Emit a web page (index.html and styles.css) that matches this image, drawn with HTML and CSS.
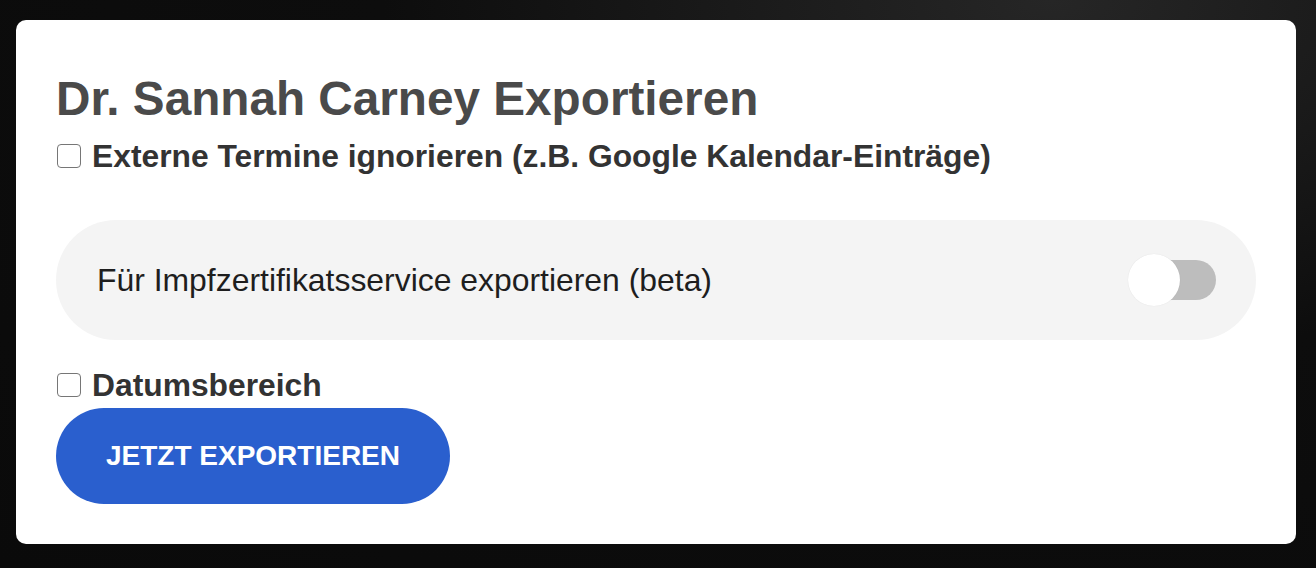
FILE: index.html
```html
<!DOCTYPE html>
<html lang="de">
<head>
<meta charset="utf-8">
<link rel="stylesheet" href="styles.css">
</head>
<body>
<div class="backdrop">
  <div class="dialog">
    <h1 class="title">Dr. Sannah Carney Exportieren</h1>
    <label class="check-row first">
      <span class="box"></span>
      <span class="check-label">Externe Termine ignorieren (z.B. Google Kalendar-Einträge)</span>
    </label>
    <div class="option-pill">
      <span class="option-text">Für Impfzertifikatsservice exportieren (beta)</span>
      <span class="toggle"><span class="track"></span><span class="knob"></span></span>
    </div>
    <label class="check-row second">
      <span class="box"></span>
      <span class="check-label">Datumsbereich</span>
    </label>
    <button class="export-btn">JETZT EXPORTIEREN</button>
  </div>
</div>
</body>
</html>
```
FILE: styles.css
```css
html, body {
  margin: 0;
  padding: 0;
  height: 100%;
}
body {
  background: #0c0c0c;
  font-family: "Liberation Sans", Arial, sans-serif;
}
.backdrop {
  height: 568px;
  box-sizing: border-box;
  padding: 20px 20px 24px 16px;
  background: radial-gradient(ellipse at 80% 0%, #262626 0%, #0d0d0d 45%, #0a0a0a 100%);
}
.dialog {
  background: #fff;
  border-radius: 10px;
  height: 524px;
  box-sizing: border-box;
  padding: 0 40px 40px 40px;
  display: flex;
  flex-direction: column;
  align-items: flex-start;
}
.title {
  margin: 51px 0 0 0;
  font-size: 47.7px;
  line-height: 56px;
  font-weight: bold;
  color: #4a4a4a;
}
.check-row {
  display: flex;
  align-items: center;
  gap: 11px;
}
.check-row.first {
  margin-top: 11px;
}
.check-row.second {
  margin-top: 27px;
}
.box {
  width: 24px;
  height: 24px;
  border: 1.5px solid #767676;
  border-radius: 4px;
  box-sizing: border-box;
  margin-left: 1px;
}
.check-label {
  font-size: 31.8px;
  line-height: 36px;
  font-weight: bold;
  color: #333;
}
.option-pill {
  margin-top: 46px;
  align-self: stretch;
  height: 120px;
  border-radius: 60px;
  background: #f4f4f4;
  display: flex;
  align-items: center;
  justify-content: space-between;
  padding: 0 40px 0 41px;
}
.option-text {
  font-size: 31.9px;
  color: #1e1e1e;
}
.toggle {
  position: relative;
  width: 88px;
  height: 52px;
  display: flex;
  align-items: center;
}
.track {
  margin-left: 8px;
  width: 80px;
  height: 40px;
  border-radius: 20px;
  background: #bdbdbd;
}
.knob {
  position: absolute;
  left: 0;
  top: 0;
  width: 52px;
  height: 52px;
  border-radius: 50%;
  background: #fff;
  box-shadow: 0 0 1px rgba(0,0,0,0.12);
}
.export-btn {
  margin-top: 5px;
  width: 394px;
  height: 96px;
  border: none;
  border-radius: 48px;
  background: #2a5fce;
  color: #fff;
  font-family: "Liberation Sans", Arial, sans-serif;
  font-weight: bold;
  font-size: 28px;
  padding: 0;
}
```
